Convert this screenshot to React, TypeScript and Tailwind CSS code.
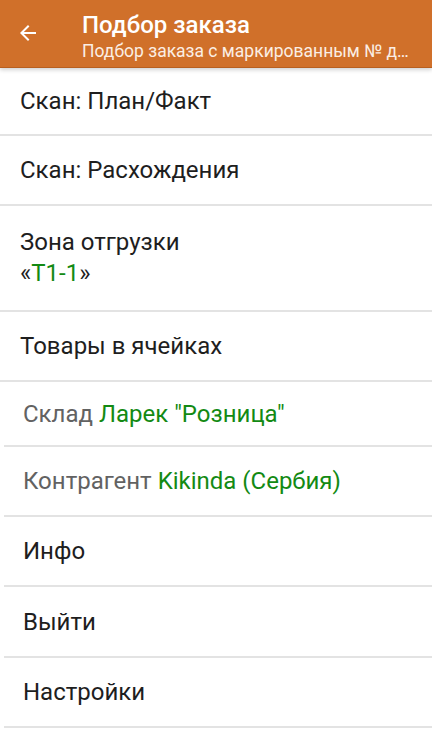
import React from "react";

const font = { fontFamily: "Roboto, 'Noto Sans', sans-serif" };

function Row({ h, left = "full", children }: { h: string; left?: "full" | "inset"; children: React.ReactNode }) {
  return (
    <div className={left === "full" ? "" : "pl-[4px]"}>
      <div className={`${h} flex flex-col justify-center border-b-2 border-[#e3e3e3] ${left === "full" ? "pl-5" : "pl-[19px]"}`}>
        {children}
      </div>
    </div>
  );
}

export default function App() {
  return (
    <div className="w-[432px] h-[739px] bg-white overflow-hidden" style={font}>
      <div className="h-[68px] bg-[#d0702a] border-b border-[#b85f1f] flex items-start relative shadow-[0_2px_4px_rgba(0,0,0,0.18)] z-10">
        <div className="w-[82px] flex items-center pl-[16px] pt-[21px]">
          <svg width="24" height="24" viewBox="0 0 24 24" fill="#ffffff">
            <path d="M20 11H7.83l5.59-5.59L12 4l-8 8 8 8 1.41-1.41L7.83 13H20v-2z" />
          </svg>
        </div>
        <div className="flex-1 min-w-0 pr-[16px] text-white pt-[10px]">
          <div className="text-[24px] leading-[30px] font-medium">Подбор заказа</div>
          <div className="text-[17.5px] leading-[22px] truncate text-[#fbeee4]">
            Подбор заказа с маркированным № демонстрационный
          </div>
        </div>
      </div>
      <div className="text-[24px] text-[#1e1e1e]">
        <Row h="h-[68px]">Скан: План/Факт</Row>
        <Row h="h-[70px]">Скан: Расхождения</Row>
        <Row h="h-[106px]">
          <div className="leading-[31px]">Зона отгрузки</div>
          <div className="leading-[31px]">
            «<span className="text-[#138a13]">Т1-1</span>»
          </div>
        </Row>
        <Row h="h-[70px]">Товары в ячейках</Row>
        <Row h="h-[65px]" left="inset">
          <div>
            <span className="text-[#626262]">Склад </span>
            <span className="text-[#138a13]">Ларек "Розница"</span>
          </div>
        </Row>
        <Row h="h-[70px]" left="inset">
          <div>
            <span className="text-[#626262]">Контрагент </span>
            <span className="text-[#138a13]">Kikinda (Сербия)</span>
          </div>
        </Row>
        <Row h="h-[70px]" left="inset">Инфо</Row>
        <Row h="h-[71px]" left="inset">Выйти</Row>
        <Row h="h-[70px]" left="inset">Настройки</Row>
      </div>
    </div>
  );
}
